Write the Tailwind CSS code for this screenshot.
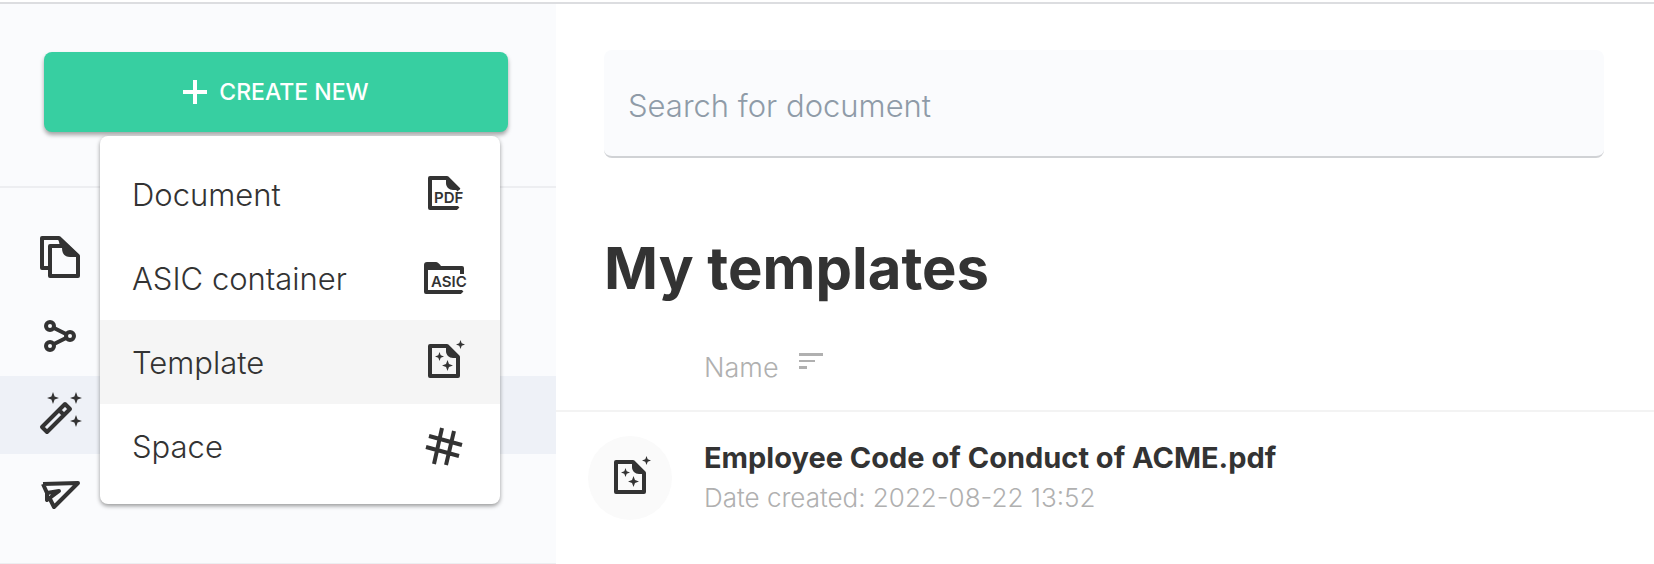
<!DOCTYPE html>
<html lang="en">
<head>
  <meta charset="UTF-8">
  <meta name="viewport" content="width=device-width, initial-scale=1.0">
  <title>My templates</title>
  <script src="https://cdn.jsdelivr.net/npm/@tailwindcss/browser@4"></script>
</head>
<body class="min-h-screen bg-white font-['Inter',sans-serif] text-[#333333]">
  <!-- Shared icon shapes -->
  <svg class="hidden">
    <symbol id="sparkle" viewBox="0 0 12 12">
      <path fill="currentColor" d="M6 0 L7.6 4.4 L12 6 L7.6 7.6 L6 12 L4.4 7.6 L0 6 L4.4 4.4 Z"/>
    </symbol>
    <symbol id="template" viewBox="0 0 48 48">
      <path fill="none" stroke="currentColor" stroke-width="4" stroke-linejoin="round" d="M10 8 H27 L38 19 V38 H10 Z"/>
      <path fill="currentColor" d="M26 8 H28 L39 19 V20 H33 C29 20 26 17 26 13 Z"/>
      <use href="#sparkle" x="15" y="14" width="9" height="9"/>
      <use href="#sparkle" x="22" y="22" width="11" height="11"/>
      <use href="#sparkle" x="36" y="2" width="9" height="9"/>
    </symbol>
  </svg>

  <div class="flex min-h-screen flex-col">
    <div class="h-1 border-b-2 border-[#dcdde0]"></div>

    <div class="flex flex-1">
      <!-- Sidebar -->
      <aside class="w-[556px] shrink-0 bg-[#fafbfd]">
        <div class="relative border-b-2 border-[#edeef1] px-12 pt-12 pb-[54px] pl-11">
          <button type="button" class="flex h-20 w-full items-center justify-center gap-3 rounded-lg bg-[#37cfa1] text-[23px] font-medium text-white shadow-[0_3px_4px_rgba(0,0,0,0.35)]">
            <svg class="size-6" viewBox="0 0 24 24" stroke="currentColor" stroke-width="4"><path d="M12 0 V24 M0 12 H24"/></svg>
            CREATE NEW
          </button>

          <!-- Create menu -->
          <ul class="absolute top-[132px] left-[100px] z-10 w-[400px] rounded-lg bg-white py-4 text-[31px] font-light shadow-[0_2px_4px_rgba(0,0,0,0.4)]">
            <li>
              <a href="#" class="flex h-21 items-center justify-between px-8">
                <span class="pt-0.5">Document</span>
                <svg class="size-12" viewBox="0 0 48 48">
                  <path fill="none" stroke="currentColor" stroke-width="4" stroke-linejoin="round" d="M39 20 L27 8 H10 V38 H36 L38 36"/>
                  <path fill="white" d="M14 22 H48 V36 H14 Z"/>
                  <path fill="currentColor" d="M26 8 H28 L40 20 H33 C29 20 26 17 26 13 Z"/>
                  <text x="14" y="33" fill="currentColor" font-size="15" font-weight="600">PDF</text>
                </svg>
              </a>
            </li>
            <li>
              <a href="#" class="flex h-21 items-center justify-between px-8">
                <span class="pt-0.5">ASIC container</span>
                <svg class="size-12" viewBox="0 0 48 48">
                  <path fill="none" stroke="currentColor" stroke-width="4" stroke-linejoin="round" d="M42 20 V14 H6 V38 H40 L42 36"/>
                  <path fill="currentColor" d="M4 14 V11 Q4 8 7 8 H16 Q18 8 21 12 V14 Z"/>
                  <path fill="white" d="M8 20 H48 V36 H8 Z"/>
                  <text x="11" y="33" fill="currentColor" font-size="15" font-weight="600">ASIC</text>
                </svg>
              </a>
            </li>
            <li>
              <a href="#" class="flex h-21 items-center justify-between bg-[#f5f5f5] px-8">
                <span class="pt-0.5">Template</span>
                <svg class="size-12"><use href="#template"/></svg>
              </a>
            </li>
            <li>
              <a href="#" class="flex h-21 items-center justify-between px-8">
                <span class="pt-0.5">Space</span>
                <svg class="size-12" viewBox="0 0 48 48" stroke="currentColor" stroke-width="4">
                  <path d="M9 14 L42 23 M6 25 L39 34 M22 6 L14 42 M34 9 L26 43"/>
                </svg>
              </a>
            </li>
          </ul>
        </div>

        <nav class="border-b-2 border-[#edeef1] pt-8 pb-[31px]">
          <a href="#" aria-label="Documents" class="flex h-[78px] items-center px-9">
            <svg class="size-12" viewBox="0 0 48 48">
              <path fill="none" stroke="currentColor" stroke-width="4" stroke-linejoin="round" d="M14 33 H6 V3 H23 L42 21 V41 H14 V11 H27"/>
              <path fill="currentColor" d="M22 3 H25 L43 20 V22 H34 C29 22 26 19 26 13 V11 H24 Z"/>
            </svg>
          </a>
          <a href="#" aria-label="Shared" class="flex h-[78px] items-center px-9">
            <svg class="size-12" viewBox="0 0 48 48" fill="none" stroke="currentColor" stroke-width="4">
              <circle cx="14" cy="13" r="4"/>
              <circle cx="34" cy="23" r="4"/>
              <circle cx="14" cy="33" r="4"/>
              <path d="M18 15 L30 21 M18 31 L30 25"/>
            </svg>
          </a>
          <a href="#" aria-label="Templates" class="flex h-[78px] items-center bg-[#eef1f7] px-9">
            <svg class="size-12" viewBox="0 0 48 48">
              <path fill="none" stroke="currentColor" stroke-width="4" stroke-linejoin="round" d="M29 13 L34 18 L11 41 L6 36 Z M23 19 L28 24"/>
              <use href="#sparkle" x="11" y="1" width="12" height="12"/>
              <use href="#sparkle" x="34" y="1" width="12" height="12"/>
              <use href="#sparkle" x="34" y="24" width="12" height="12"/>
            </svg>
          </a>
          <a href="#" aria-label="Sent" class="flex h-[78px] items-center px-9">
            <svg class="size-12" viewBox="0 0 48 48" fill="none" stroke="currentColor" stroke-width="4" stroke-linejoin="round">
              <path d="M7 15 L42 14 L18 38 L14 30 M7 15 L11 24 L23 22 L11 31 V24"/>
            </svg>
          </a>
        </nav>
      </aside>

      <!-- Templates list -->
      <main class="min-w-0 flex-1">
        <div class="pt-[46px] pr-[50px] pl-12">
          <input type="search" aria-label="Search for document" placeholder="Search for document"
            class="block h-[108px] w-full rounded-lg border-b-2 border-[#d0d2d5] bg-[#fafbfd] px-6 pt-1 text-[31px] font-light placeholder:text-[#8f9ba8]">
          <h1 class="mt-[74px] text-[58px] leading-[72px] font-bold">My templates</h1>
        </div>

        <table class="mt-11 w-full text-left">
          <thead>
            <tr class="border-b-2 border-[#f3f3f3]">
              <th class="w-[148px]"></th>
              <th class="pb-[22px] font-light text-[#b0b0b0]">
                <div class="flex gap-5 text-[27px] leading-10">
                  Name
                  <svg class="mt-[5px] h-4 w-6" viewBox="0 0 24 16" fill="currentColor"><path d="M0 0 H24 V3 H0 Z M0 7 H16 V9 H0 Z M0 13 H8 V16 H0 Z"/></svg>
                </div>
              </th>
            </tr>
          </thead>
          <tbody>
            <tr>
              <td class="px-8 py-6">
                <div class="flex size-21 items-center justify-center rounded-full bg-[#fafafa]">
                  <svg class="size-12"><use href="#template"/></svg>
                </div>
              </td>
              <td>
                <p class="text-[29px] leading-10 font-bold">Employee Code of Conduct of ACME.pdf</p>
                <p class="text-[26px] leading-10 font-light text-[#b0b0b0]">Date created: 2022-08-22 13:52</p>
              </td>
            </tr>
          </tbody>
        </table>
      </main>
    </div>
  </div>
</body>
</html>
